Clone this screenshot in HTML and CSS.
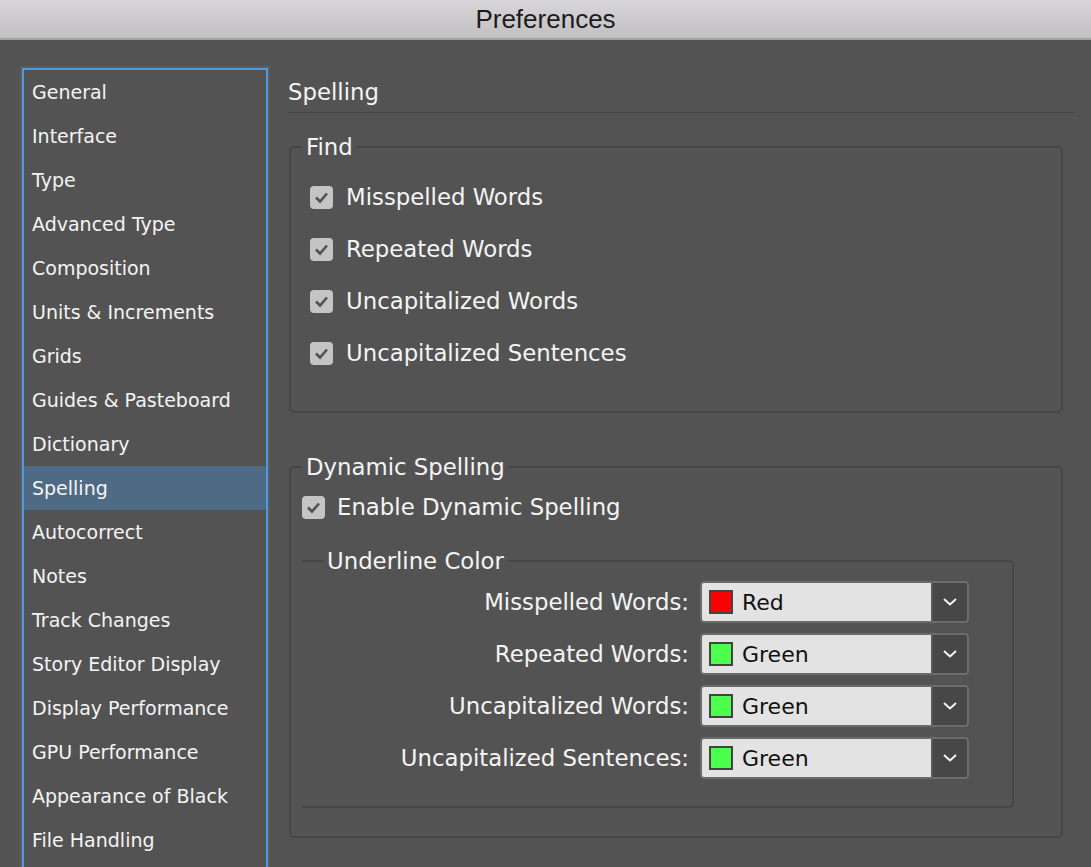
FILE: index.html
```html
<!DOCTYPE html>
<html lang="en">

<head>
    <meta charset="UTF-8">
    <title>Preferences</title>
    <link rel="stylesheet" href="styles.css">
</head>

<body>
    <!-- Title bar -->
    <div class="titlebar">Preferences</div>

    <div class="prefs-window">
        <!-- Category list -->
        <ul class="prefs-nav">
            <li>General</li>
            <li>Interface</li>
            <li>Type</li>
            <li>Advanced Type</li>
            <li>Composition</li>
            <li>Units &amp; Increments</li>
            <li>Grids</li>
            <li>Guides &amp; Pasteboard</li>
            <li>Dictionary</li>
            <li class="active">Spelling</li>
            <li>Autocorrect</li>
            <li>Notes</li>
            <li>Track Changes</li>
            <li>Story Editor Display</li>
            <li>Display Performance</li>
            <li>GPU Performance</li>
            <li>Appearance of Black</li>
            <li>File Handling</li>
        </ul>

        <!-- Spelling pane -->
        <div class="prefs-pane">
            <h1 class="pane-title">Spelling</h1>

            <fieldset class="group group-find">
                <legend>Find</legend>
                <div class="check-list">
                    <div class="check-row"><span class="checkbox"><svg viewBox="0 0 23 23"><polyline points="6,11.5 10,15.5 17,7.5"/></svg></span>Misspelled Words</div>
                    <div class="check-row"><span class="checkbox"><svg viewBox="0 0 23 23"><polyline points="6,11.5 10,15.5 17,7.5"/></svg></span>Repeated Words</div>
                    <div class="check-row"><span class="checkbox"><svg viewBox="0 0 23 23"><polyline points="6,11.5 10,15.5 17,7.5"/></svg></span>Uncapitalized Words</div>
                    <div class="check-row"><span class="checkbox"><svg viewBox="0 0 23 23"><polyline points="6,11.5 10,15.5 17,7.5"/></svg></span>Uncapitalized Sentences</div>
                </div>
            </fieldset>

            <fieldset class="group group-dynamic">
                <legend>Dynamic Spelling</legend>
                <div class="check-row"><span class="checkbox"><svg viewBox="0 0 23 23"><polyline points="6,11.5 10,15.5 17,7.5"/></svg></span>Enable Dynamic Spelling</div>

                <fieldset class="group group-underline">
                    <legend>Underline Color</legend>
                    <div class="color-grid">
                        <span class="color-label">Misspelled Words:</span>
                        <div class="select">
                            <span class="select-value"><span class="swatch swatch-red"></span>Red</span>
                            <span class="select-button"><svg viewBox="0 0 16 10"><polyline points="2,2 8,7.5 14,2"/></svg></span>
                        </div>

                        <span class="color-label">Repeated Words:</span>
                        <div class="select">
                            <span class="select-value"><span class="swatch swatch-green"></span>Green</span>
                            <span class="select-button"><svg viewBox="0 0 16 10"><polyline points="2,2 8,7.5 14,2"/></svg></span>
                        </div>

                        <span class="color-label">Uncapitalized Words:</span>
                        <div class="select">
                            <span class="select-value"><span class="swatch swatch-green"></span>Green</span>
                            <span class="select-button"><svg viewBox="0 0 16 10"><polyline points="2,2 8,7.5 14,2"/></svg></span>
                        </div>

                        <span class="color-label">Uncapitalized Sentences:</span>
                        <div class="select">
                            <span class="select-value"><span class="swatch swatch-green"></span>Green</span>
                            <span class="select-button"><svg viewBox="0 0 16 10"><polyline points="2,2 8,7.5 14,2"/></svg></span>
                        </div>
                    </div>
                </fieldset>
            </fieldset>
        </div>
    </div>
</body>

</html>
```

FILE: styles.css
```css
body {
    margin: 0;
    height: 867px;
    overflow: hidden;
    background-color: #535353;
    color: #f4f4f4;
    font-family: 'DejaVu Sans', sans-serif;
}

/* Title bar */
.titlebar {
    height: 38px;
    line-height: 38px;
    text-align: center;
    font-family: 'Liberation Sans', Arial, sans-serif;
    font-size: 26px;
    color: #1c1c1c;
    background: linear-gradient(#d8d6d8, #c1bfc1);
    border-bottom: 2px solid #a3a1a3;
}

.prefs-window {
    display: flex;
    align-items: flex-start;
}

/* Category list */
.prefs-nav {
    list-style: none;
    margin: 28px 0 0 22px;
    padding: 0;
    width: 242px;
    height: 830px;
    border: 2px solid #4b9be3;
    box-shadow: 0 0 0 2px #5c5c5c;
}

.prefs-nav li {
    height: 44px;
    line-height: 44px;
    padding-left: 8px;
    font-size: 19px;
    white-space: nowrap;
}

.prefs-nav li.active {
    background-color: #4f6a85;
}

/* Right pane */
.prefs-pane {
    margin-left: 20px;
    width: 787px;
}

.pane-title {
    margin: 38px 0 0;
    padding-bottom: 6px;
    height: 28px;
    line-height: 28px;
    font-size: 22.8px;
    font-weight: normal;
    border-bottom: 1px solid #454545;
}

.group {
    margin: 0;
    border: 2px solid #464646;
    border-radius: 5px;
    font-size: 22.8px;
}

.group legend {
    padding: 0 4px;
    height: 28px;
    line-height: 28px;
}

.group-find {
    margin: 20px 0 0 1px;
    width: 774px;
    box-sizing: border-box;
    padding: 10px 0 32px 11px;
}

.check-list {
    margin-left: 8px;
}

.check-row {
    display: flex;
    align-items: center;
    height: 52px;
}

.checkbox {
    display: flex;
    width: 23px;
    height: 23px;
    margin-right: 13px;
    border-radius: 4px;
    background-color: #c4c4c4;
}

.checkbox svg {
    width: 23px;
    height: 23px;
    fill: none;
    stroke: #525252;
    stroke-width: 2.6;
}

.group-dynamic {
    margin: 40px 0 0 1px;
    width: 774px;
    box-sizing: border-box;
    padding: 0 47px 28px 11px;
}

.group-dynamic .check-row .checkbox {
    margin-right: 12px;
}

.group-underline {
    margin: 14px 0 0;
    padding: 1px 0 22px 21px;
    border-left: none;
    border-radius: 0 5px 5px 0;
}

.color-grid {
    display: grid;
    grid-template-columns: 366px 269px;
    grid-auto-rows: 52px;
    column-gap: 11px;
    align-items: center;
}

.color-label {
    text-align: right;
    white-space: nowrap;
}

.select {
    display: flex;
    height: 42px;
    box-sizing: border-box;
    border: 2px solid #6b6b6b;
    border-radius: 4px;
    overflow: hidden;
}

.select-value {
    flex: 1;
    display: flex;
    align-items: center;
    padding-left: 7px;
    background-color: #e3e3e3;
    color: #111;
    font-size: 22px;
}

.swatch {
    width: 20px;
    height: 20px;
    margin-right: 9px;
    border: 2px solid #444;
}

.swatch-red {
    background-color: #ff0000;
}

.swatch-green {
    background-color: #4cff4c;
}

.select-button {
    display: flex;
    align-items: center;
    justify-content: center;
    width: 34px;
    border-left: 2px solid #5a5a5a;
    background-color: #474747;
}

.select-button svg {
    width: 16px;
    height: 10px;
    fill: none;
    stroke: #f4f4f4;
    stroke-width: 2;
}
```
